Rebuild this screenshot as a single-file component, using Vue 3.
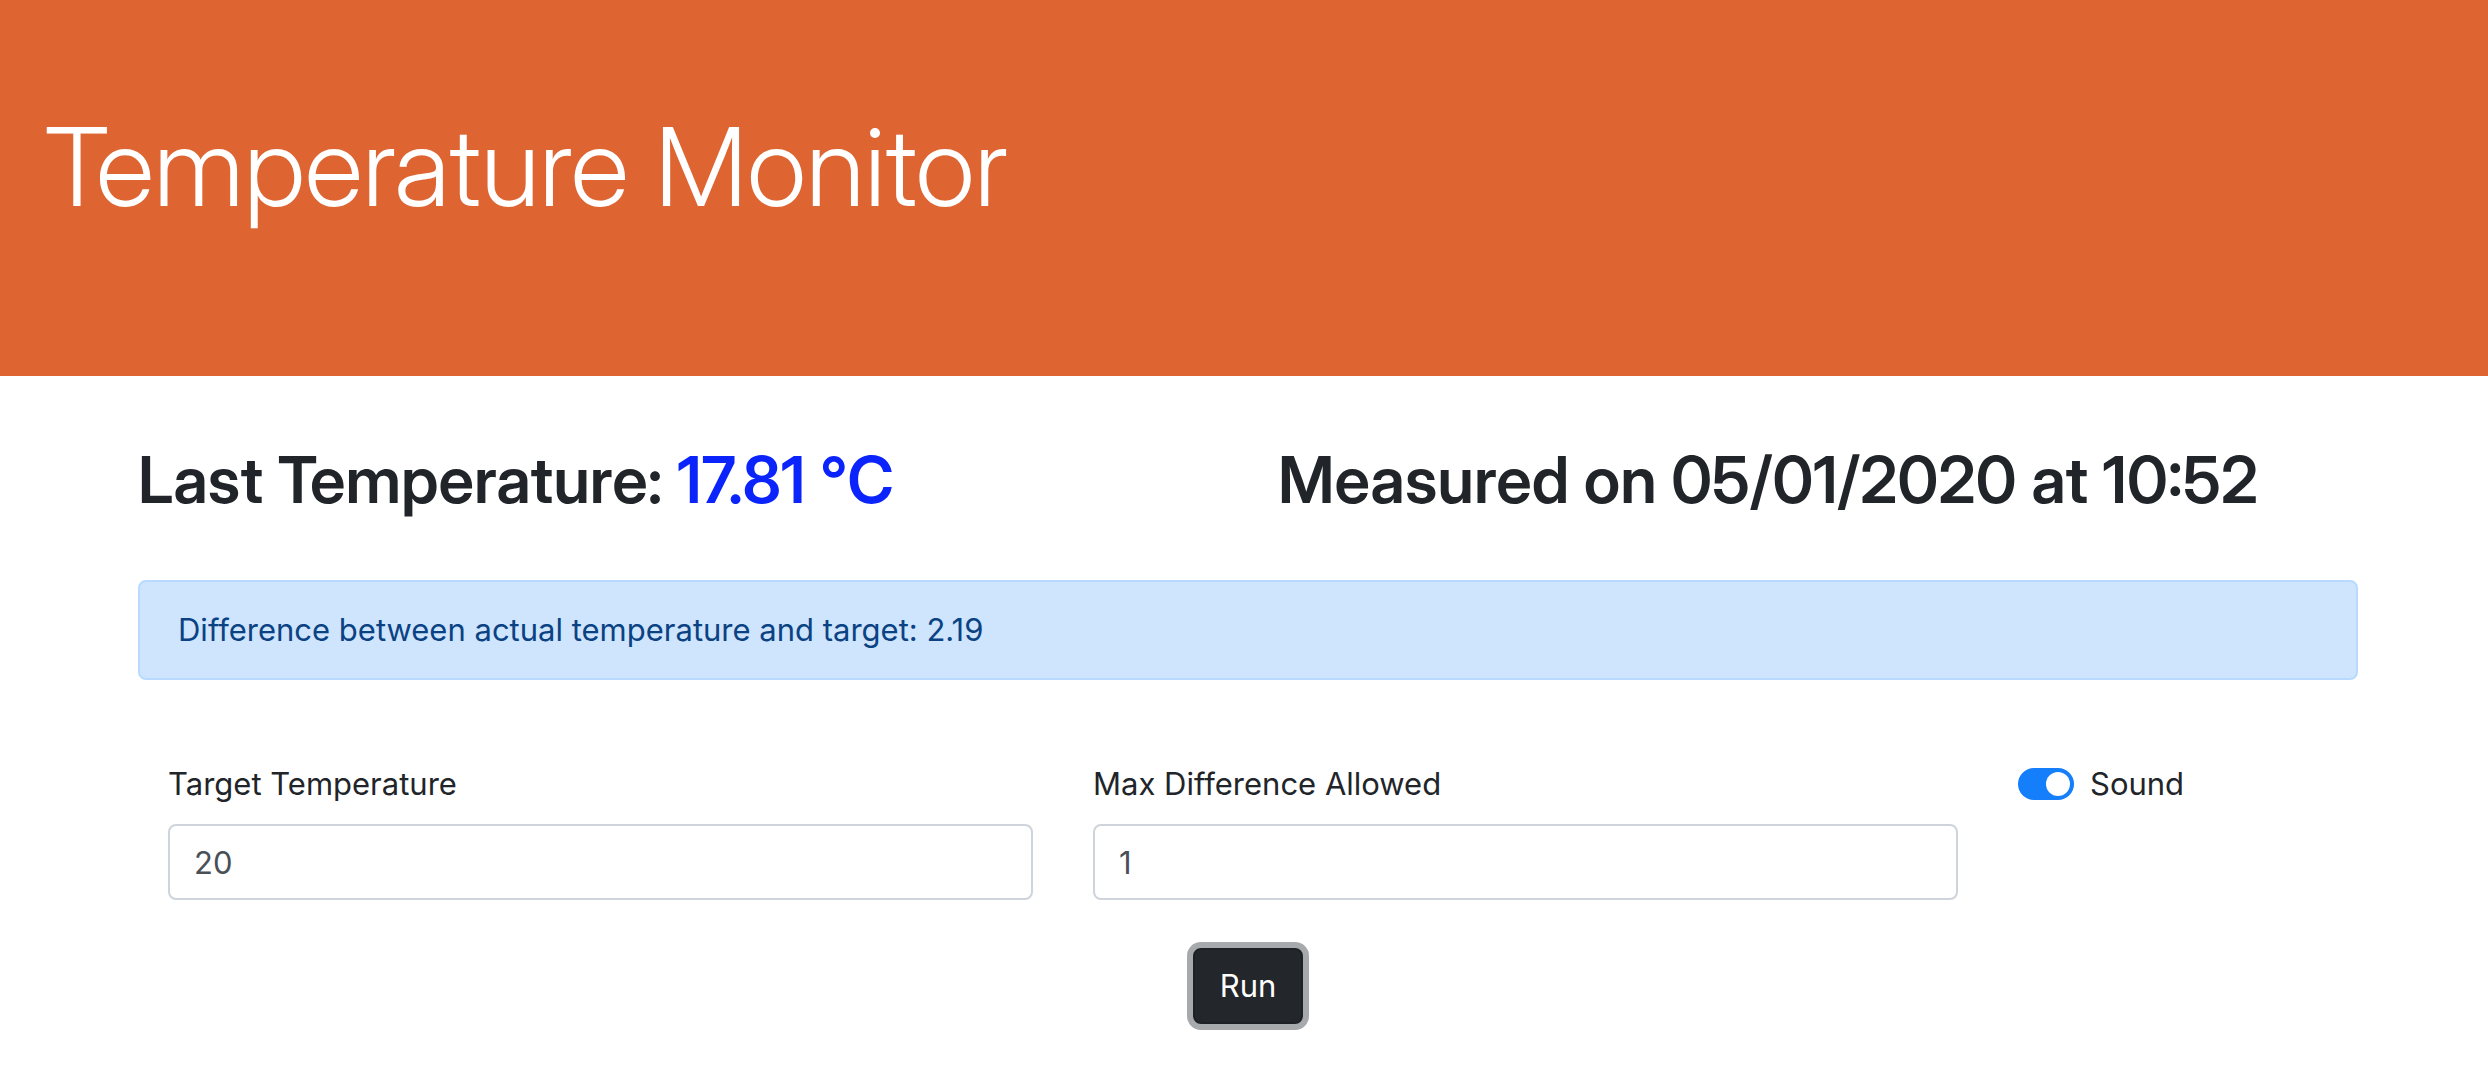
<script setup>
import { ref } from 'vue'
const target = ref('20')
const maxDifference = ref('1')
const sound = ref(true)
</script>

<template>
  <div class="page">
    <header class="hero">
      <h1>Temperature Monitor</h1>
    </header>
    <main class="content">
      <div class="summary">
        <h2>Last Temperature: <span class="cold">17.81 °C</span></h2>
        <h2>Measured on 05/01/2020 at 10:52</h2>
      </div>
      <div class="alert" role="alert">Difference between actual temperature and target: 2.19</div>
      <form @submit.prevent>
        <div class="fields">
          <div class="field">
            <label for="target">Target Temperature</label>
            <input id="target" v-model="target" class="control" type="text" />
          </div>
          <div class="field">
            <label for="difference">Max Difference Allowed</label>
            <input id="difference" v-model="maxDifference" class="control" type="text" />
          </div>
          <div class="toggle">
            <input id="sound" v-model="sound" class="switch" type="checkbox" />
            <label for="sound">Sound</label>
          </div>
        </div>
        <div class="actions">
          <button class="run" type="submit">Run</button>
        </div>
      </form>
    </main>
  </div>
</template>

<style>
body {
  margin: 0;
  background: #fff;
}
</style>

<style scoped>
.page,
.page * {
  box-sizing: border-box;
}
.page {
  padding-bottom: 64px;
  font-family: Inter, "Liberation Sans", sans-serif;
  font-size: 31px;
  line-height: 48px;
  color: #212529;
}
.hero {
  padding: 98px 44px 142px;
  background: #de6432;
  color: #fff;
}
h1,
h2 {
  margin: 0;
  font-family: "Inter Display", Inter, "Liberation Sans", sans-serif;
}
h1 {
  font-size: 109px;
  font-weight: 300;
  line-height: 136px;
}
.content {
  margin: 0 130px 0 138px;
}
.summary {
  display: grid;
  grid-template-columns: 1fr 1fr;
  gap: 60px;
  padding: 64px 0 60px;
}
h2 {
  font-size: 64px;
  font-weight: 600;
  line-height: 80px;
  white-space: nowrap;
}
.cold {
  color: #0b24fb;
}
.alert {
  padding: 24px 38px;
  border: 2px solid #b9dafe;
  border-radius: 8px;
  background: #cee5fd;
  color: #0b4283;
}
.fields {
  display: grid;
  grid-template-columns: 5fr 5fr 2fr;
  padding: 80px 0 48px;
}
.field {
  display: flex;
  flex-direction: column;
  gap: 16px;
  padding: 0 30px;
}
.control {
  width: 100%;
  height: 76px;
  padding: 12px 24px;
  border: 2px solid #ced4da;
  border-radius: 8px;
  background: #fff;
  color: #495057;
  font: inherit;
}
.toggle {
  display: flex;
  align-items: center;
  align-self: start;
  gap: 16px;
  padding: 0 30px;
}
.switch {
  appearance: none;
  display: flex;
  width: 56px;
  height: 32px;
  margin: 0;
  padding: 4px;
  border-radius: 16px;
  background: #adb5bd;
}
.switch::before {
  content: "";
  width: 24px;
  height: 24px;
  border-radius: 50%;
  background: #fff;
}
.switch:checked {
  justify-content: flex-end;
  background: #157efb;
}
.actions {
  display: flex;
  justify-content: center;
}
.run {
  padding: 12px 25px;
  border: 2px solid #1d2124;
  border-radius: 8px;
  background: #23272b;
  color: #fff;
  font: inherit;
  box-shadow: 0 0 0 6px #a7aaad;
}
</style>
